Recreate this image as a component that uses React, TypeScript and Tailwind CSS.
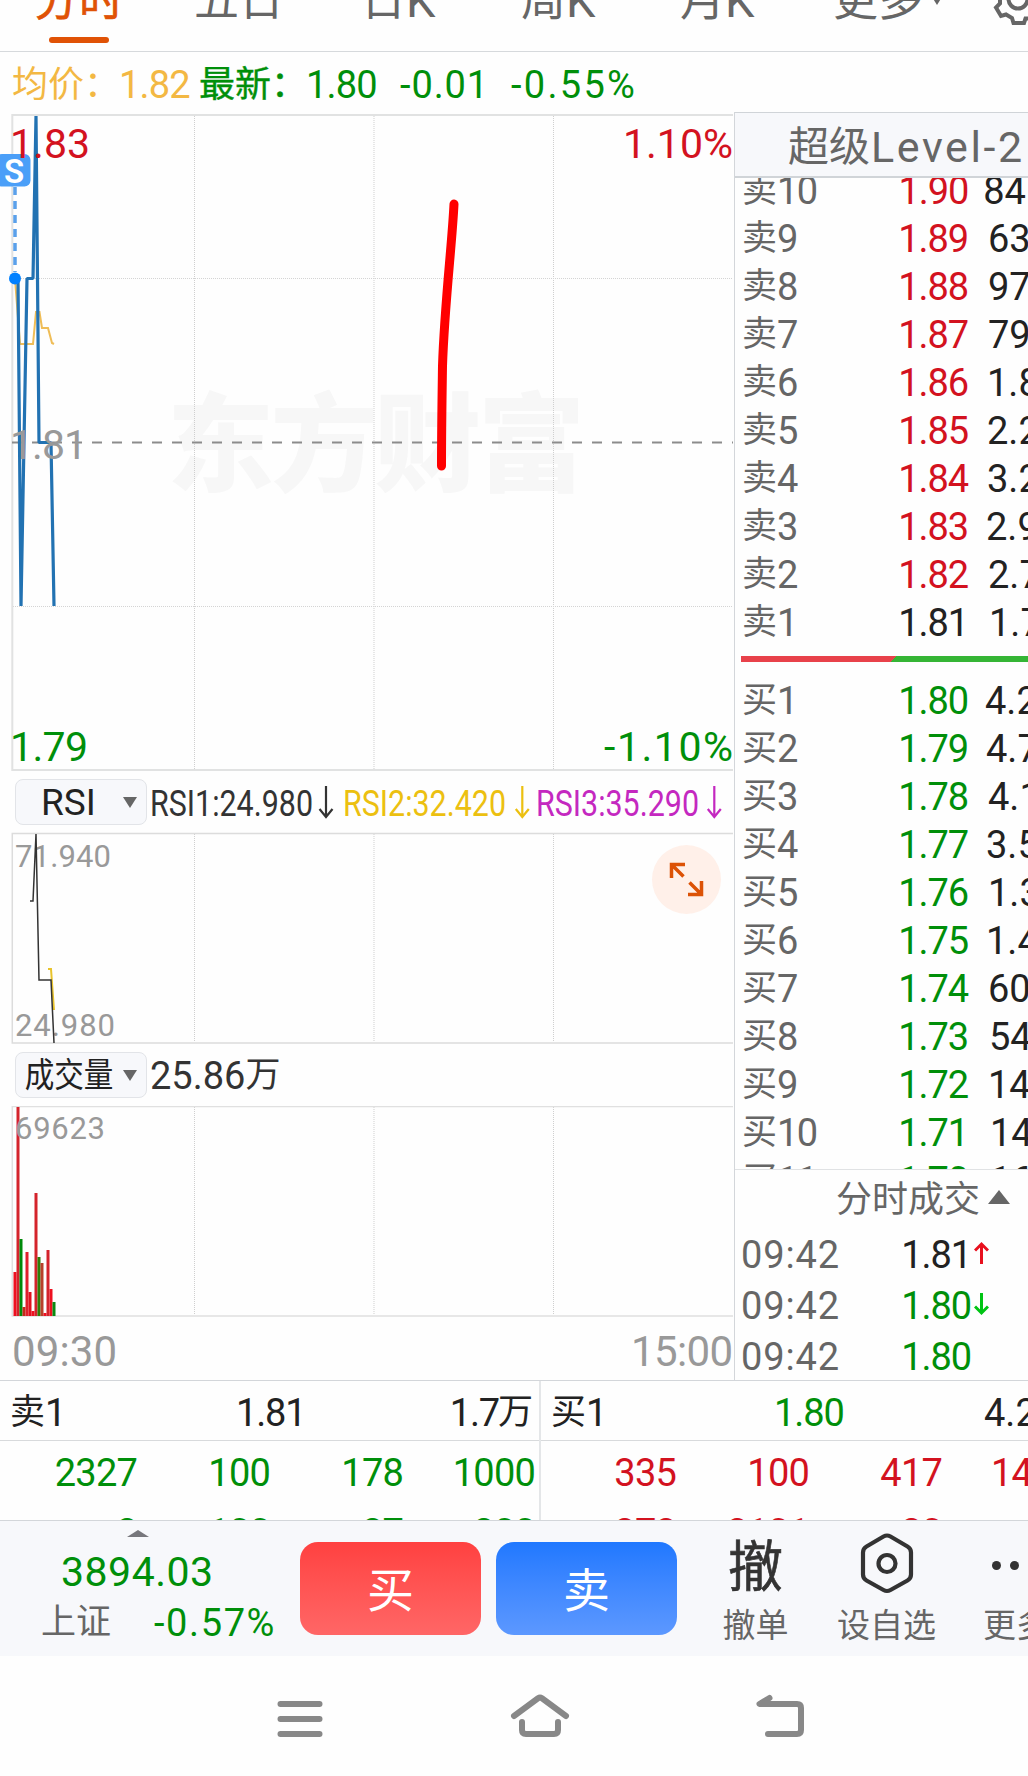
import type { ReactNode } from "react";

const GREEN = "#008f0a";
const RED = "#d3121f";

/* Latin digits are drawn a little larger than the Chinese glyphs beside them. */
function Num({ children, className = "" }: { children: ReactNode; className?: string }) {
  return <span className={`text-[38px] ${className}`}>{children}</span>;
}

const tabs = [
  { cjk: "分时", latin: "", cls: "w-[161px] pl-[34px] text-[#e05206] [-webkit-text-stroke:0.6px]" },
  { cjk: "五日", latin: "", cls: "w-[200px] pl-[33px]" },
  { cjk: "日", latin: "K", cls: "w-[160px]" },
  { cjk: "周", latin: "K", cls: "w-[159px]" },
  { cjk: "月", latin: "K", cls: "w-[153px]" },
];

const sells = [
  { n: "10", p: "1.90", v: "84", pad: "pl-[15px]" },
  { n: "9", p: "1.89", v: "63", pad: "pl-[20px]" },
  { n: "8", p: "1.88", v: "97", pad: "pl-[20px]" },
  { n: "7", p: "1.87", v: "79", pad: "pl-[20px]" },
  { n: "6", p: "1.86", v: "1.8", pad: "pl-[19px]" },
  { n: "5", p: "1.85", v: "2.2", pad: "pl-[19px]" },
  { n: "4", p: "1.84", v: "3.2", pad: "pl-[19px]" },
  { n: "3", p: "1.83", v: "2.9", pad: "pl-[18px]" },
  { n: "2", p: "1.82", v: "2.7", pad: "pl-[20px]" },
  { n: "1", p: "1.81", v: "1.7", pad: "pl-[21px]" },
];

const buys = [
  { n: "1", p: "1.80", v: "4.2", pad: "pl-[17px]" },
  { n: "2", p: "1.79", v: "4.7", pad: "pl-[18px]" },
  { n: "3", p: "1.78", v: "4.1", pad: "pl-[20px]" },
  { n: "4", p: "1.77", v: "3.5", pad: "pl-[18px]" },
  { n: "5", p: "1.76", v: "1.3", pad: "pl-[20px]" },
  { n: "6", p: "1.75", v: "1.4", pad: "pl-[18px]" },
  { n: "7", p: "1.74", v: "60", pad: "pl-[20px]" },
  { n: "8", p: "1.73", v: "54", pad: "pl-[21px]" },
  { n: "9", p: "1.72", v: "14", pad: "pl-[20px]" },
  { n: "10", p: "1.71", v: "14", pad: "pl-[22px]" },
  { n: "11", p: "1.70", v: "16", pad: "pl-[22px]" },
];

const bars: [number, number, string][] = [
  [15, 1272, "#ee1020"],
  [18, 1107, "#d4232b"],
  [21, 1239, "#008a0a"],
  [24, 1307, "#c32a1a"],
  [27, 1252, "#e0202c"],
  [30, 1292, "#e0101e"],
  [33, 1311, "#ee1020"],
  [36, 1193, "#d4232b"],
  [39, 1257, "#2f7d08"],
  [42, 1263, "#b8402a"],
  [45, 1313, "#ee1020"],
  [48, 1250, "#d4232b"],
  [51, 1289, "#ee1020"],
  [54, 1302, "#0a8a12"],
];

function BookRow({ side, n, p, v, pad, tone }: { side: string; n: string; p: string; v: string; pad: string; tone: string }) {
  return (
    <div className="flex h-12 shrink-0 items-center whitespace-nowrap leading-[48px]">
      <div className="flex w-[150px] items-center pl-[7px] pt-[2px] text-[#666]">
        <span className="text-[35px]">{side}</span>
        <Num className="-tracking-[1.5px]">{n}</Num>
      </div>
      <div className={`flex w-[84px] justify-end pt-[2px] ${tone}`}>
        <Num className="-tracking-[1.1px]">{p}</Num>
      </div>
      <div className={`flex w-[60px] pt-[2px] text-[#222] ${pad}`}>
        <Num>{v}</Num>
      </div>
    </div>
  );
}

function VGrid({ y1, y2 }: { y1: number; y2: number }) {
  return (
    <g stroke="#cfcfcf" strokeWidth="1" strokeDasharray="1 1">
      <path d={`M194.5 ${y1}V${y2}`} />
      <path d={`M374 ${y1}V${y2}`} />
      <path d={`M553.5 ${y1}V${y2}`} />
    </g>
  );
}

function PriceChart() {
  return (
    <svg className="block h-[658px] w-[734px]" viewBox="0 114 734 658">
      <text x="167" y="483" fontSize="107" fontWeight="900" fill="#f7f7f7" textLength="418" fontFamily="Noto Sans CJK SC">
        东方财富
      </text>
      <VGrid y1={116} y2={770} />
      <g stroke="#d4d4d4" strokeDasharray="1 1">
        <path d="M13 278.5H733M13 606.5H733" />
      </g>
      <path d="M733 115H12.3V770H733" fill="none" stroke="#e1e2e2" strokeWidth="2" />
      <path d="M12 442.5H733" stroke="#8c8c8c" strokeWidth="2" strokeDasharray="10 10" />
      <path d="M15 279L20 344H33L36 312H39.5L42 328H48L52 343L54 344" fill="none" stroke="#efbd57" strokeWidth="2" />
      <path d="M15 278.5H18L21 606L27 278.5H33L36 116L39 442.500H51L54 606" fill="none" stroke="#2272b2" strokeWidth="3.2" strokeLinejoin="bevel" />
      <path d="M15 187V272" stroke="#5aa0ea" strokeWidth="3.500" strokeDasharray="8 6" />
      <circle cx="15" cy="278.5" r="6" fill="#0080ff" />
      <rect x="-4" y="154" width="34.500" height="32.500" rx="6" fill="#4b9ff8" />
      <text x="14" y="182.500" fontSize="33" fontWeight="600" fill="#fff" textAnchor="middle">S</text>
      <g fontSize="41">
        <text x="10" y="158" fill={RED} textLength="80">1.83</text>
        <text x="623" y="158" fill={RED} textLength="110">1.10%</text>
        <text x="10" y="458.500" fill="#999" textLength="77">1.81</text>
        <text x="10" y="760.500" fill={GREEN} textLength="78">1.79</text>
        <text x="604" y="760.500" fill={GREEN} textLength="129">-1.10%</text>
      </g>
      <path d="M454 204C452 245 444.500 305 442.500 366C442 400 441.500 430 441.500 466" fill="none" stroke="#ff0000" strokeWidth="9" strokeLinecap="round" />
    </svg>
  );
}

function RsiChart() {
  return (
    <svg className="block h-[212px] w-[734px]" viewBox="0 832 734 212">
      <VGrid y1={834} y2={1042} />
      <path d="M733 833.500H12.300V1043H733" fill="none" stroke="#dcdcdc" strokeWidth="1.500" />
      <g fontSize="31" fill="#999">
        <text x="15" y="866.500" textLength="96">71.940</text>
        <text x="15" y="1036" textLength="100">24.980</text>
      </g>
      <path d="M48 969H51L54 1010" fill="none" stroke="#e8c32c" strokeWidth="2" />
      <path d="M30 901H33L36 834L39 980H51L54 1043" fill="none" stroke="#333" strokeWidth="1.500" />
      <circle cx="686.500" cy="879.500" r="34.500" fill="#fff0e9" />
      <path d="M685 864.500H671.500V878M672 865L683.500 876.500M688 894.500H701.500V881M701 894L689.500 882.500" fill="none" stroke="#dc5206" strokeWidth="3.500" />
    </svg>
  );
}

function VolumeChart() {
  return (
    <svg className="block h-[274px] w-[734px]" viewBox="0 1106 734 274">
      <VGrid y1={1107} y2={1315} />
      <path d="M733 1106.500H12.300V1316H733" fill="none" stroke="#e0e0e0" strokeWidth="1.500" />
      {bars.map(([x, y, c]) => (
        <rect key={x} x={x - 1.5} y={y} width="3" height={1316 - y} fill={c} />
      ))}
      <g fill="#999">
        <text x="15" y="1139" fontSize="31" textLength="90">69623</text>
        <text x="12" y="1366" fontSize="42" textLength="105">09:30</text>
        <text x="631" y="1366" fontSize="42" textLength="102">15:00</text>
      </g>
    </svg>
  );
}

function Selector({ children }: { children: ReactNode }) {
  return (
    <div className="relative h-[46px] w-[132px] shrink-0 rounded-lg border border-[#e2e4e8] bg-[#f7f8fb] text-[#222]">
      {children}
      <span className="absolute right-[9px] top-[17px] h-0 w-0 border-x-[7px] border-t-[11px] border-x-transparent border-t-[#666]" />
    </div>
  );
}

function RsiLegend() {
  const items = [
    { x: 150, t: "RSI1:24.980", c: "#333", a: 326 },
    { x: 343, t: "RSI2:32.420", c: "#ecc010", a: 522.3 },
    { x: 536, t: "RSI3:35.290", c: "#c428c0", a: 714.3 },
  ];
  return (
    <svg className="block h-[60px] w-[587px]" viewBox="147 772 587 60">
      {items.map((i) => (
        <g key={i.t}>
          <text x={i.x} y="815.500" fontSize="37" fill={i.c} textLength="163" lengthAdjust="spacingAndGlyphs">
            {i.t}
          </text>
          <path d={`M${i.a} 786V817M${i.a - 6.500} 809L${i.a} 817L${i.a + 6.500} 809`} fill="none" stroke={i.c} strokeWidth="2.200" />
        </g>
      ))}
    </svg>
  );
}

function QueueCells({ rows, widths, color }: { rows: string[][]; widths: string[]; color: string }) {
  return (
    <div className="h-[79px] overflow-hidden pt-[2px]">
      {rows.map((r, k) => (
        <div key={k} className={`flex h-[60px] items-center whitespace-nowrap leading-[60px] ${color}`}>
          {r.map((c, i) => (
            <div key={i} className={`flex shrink-0 justify-end ${widths[i]}`}>
              <Num className="-tracking-[0.8px]">{c}</Num>
            </div>
          ))}
        </div>
      ))}
    </div>
  );
}

export default function App() {
  return (
    <div className="h-[1776px] w-[1028px] overflow-hidden bg-[#fefefe] font-['Roboto','Noto_Sans_CJK_SC',sans-serif]">
      {/* period tabs */}
      <div className="flex h-[52px] overflow-hidden border-b border-[#d6d9dc] text-[45px] leading-[60px] text-[#666]">
        {tabs.map((t, i) => (
          <div key={t.cjk} className={`relative shrink-0 whitespace-nowrap ${t.cls}`}>
            <div className="-mt-[29px] flex items-center">
              {t.cjk}
              {t.latin && <span className="text-[47px]">{t.latin}</span>}
            </div>
            {i === 0 && <div className="absolute left-[49px] top-[37px] h-[6px] w-[60px] rounded-full bg-[#e05206]" />}
          </div>
        ))}
        <div className="-mt-[29px] w-[98px] shrink-0">更多</div>
        <svg className="h-[30px] w-[97px] shrink-0" viewBox="931 0 97 30">
          <path d="M932 -3H942L937 5Z" fill="#666" />
          <g fill="none" stroke="#666" strokeWidth="4">
            <circle cx="1018" cy="-1" r="9.500" />
            <path d="M1028 18.500L1025.500 18.500L1024 23H1013.500L1012 18L1006 14.500L1001 16L996 7.500L1000 3.500V-4" />
          </g>
        </svg>
      </div>

      <div className="flex h-[1328px]">
        {/* charts */}
        <div className="w-[734px] shrink-0">
          <div className="flex h-[62px] items-center whitespace-nowrap pl-[12px] pt-[3px] text-[36px] leading-[58px] text-[#f3b843]">
            <span className="w-[107px]">均价：</span>
            <Num className="w-[80px] -tracking-[0.8px]">1.82</Num>
            <span className="flex text-[#008f0a]">
              <span className="w-[107px] [-webkit-text-stroke:0.4px]">最新：</span>
              <Num className="w-[94px] -tracking-[0.8px]">1.80</Num>
              <Num className="w-[111px] tracking-[0.9px]">-0.01</Num>
              <Num className="tracking-[2.3px]">-0.55%</Num>
            </span>
          </div>
          <PriceChart />
          <div className="flex h-[60px] items-center pl-[15px]">
            <Selector>
              <span className="block pl-[25px] text-[37px] leading-[46px]">RSI</span>
            </Selector>
            <RsiLegend />
          </div>
          <RsiChart />
          <div className="flex h-[62px] items-center pl-[15px]">
            <Selector>
              <span className="block origin-left scale-x-[0.87] whitespace-nowrap pl-[10px] text-[34px] leading-[45px]">成交量</span>
            </Selector>
            <span className="flex items-center pl-[3px] pt-[2px] text-[35px] leading-[60px] text-[#333]">
              <Num>25.86</Num>万
            </span>
          </div>
          <VolumeChart />
        </div>

        {/* order book */}
        <div className="mt-[60px] flex h-[1268px] w-[294px] flex-col overflow-hidden border-l border-[#d3d6da]">
          <div className="flex h-[66px] shrink-0 items-center whitespace-nowrap border-b-2 border-t border-[#d0d4d8] bg-[#f7f8fb] pl-[53px] pt-[4px] text-[41px] leading-[60px] text-[#666]">
            超级<span className="ml-[1px] text-[43px] tracking-[2.6px]">Level-2</span>
          </div>
          <div className="flex h-[992px] shrink-0 flex-col overflow-hidden border-b border-[#e0e2e4]">
            <div className="-mt-[12px]">
              {sells.map((r) => (
                <BookRow key={r.n} side="卖" {...r} tone={r.n === "1" ? "text-[#222]" : "text-[#d3121f]"} />
              ))}
            </div>
            <div className="my-[10px] ml-[6px] h-[6px] shrink-0 bg-[linear-gradient(135deg,#e8414a_0_110px,#35b535_110px)]" />
            <div className="mt-[4px]">
              {buys.map((r) => (
                <BookRow key={r.n} side="买" {...r} tone="text-[#008f0a]" />
              ))}
            </div>
          </div>
          <div className="flex h-[57px] shrink-0 items-center pl-[101px] pt-[4px] text-[36px] leading-[53px] text-[#666]">
            分时成交
            <span className="mb-[8px] ml-[8px] h-0 w-0 border-x-[11px] border-b-[14px] border-x-transparent border-b-[#666]" />
          </div>
          {[
            { p: "1.81", tone: "text-[#222]", c: "#e8101e", d: "M7.500 23V3M1 9.500L7.500 3L14 9.500" },
            { p: "1.80", tone: "text-[#008f0a]", c: "#00c414", d: "M7.500 1V21M1 14.500L7.500 21L14 14.500" },
            { p: "1.80", tone: "text-[#008f0a]", c: "", d: "" },
          ].map((r, i) => (
            <div key={i} className="flex h-[51px] shrink-0 items-center pt-[6px] leading-[45px]">
              <Num className="w-[150px] pl-[6px] tracking-[0.9px] text-[#666]">09:42</Num>
              <Num className={`w-[86px] text-right -tracking-[1.1px] ${r.tone}`}>{r.p}</Num>
              {r.d && (
                <svg className="mb-[5px] ml-[3px] h-6 w-[15px]" viewBox="0 0 15 24">
                  <path d={r.d} fill="none" stroke={r.c} strokeWidth="3" />
                </svg>
              )}
            </div>
          ))}
        </div>
      </div>

      {/* level-one queue */}
      <div className="flex h-[140px] border-t border-[#d3d6da]">
        <div className="w-[541px] shrink-0 border-r-2 border-[#e4e6e8]">
          <div className="flex h-[60px] items-center whitespace-nowrap border-b border-[#d8dadc] pl-[10px] pt-[4px] text-[35px] leading-[56px] text-[#222]">
            <span className="flex w-[226px]">卖<Num>1</Num></span>
            <Num className="-tracking-[1.2px]">1.81</Num>
            <span className="ml-auto flex pr-[6px]"><Num className="-tracking-[1.2px]">1.7</Num><span className="-ml-[1px]">万</span></span>
          </div>
          <QueueCells
            color="text-[#008f0a]"
            widths={["w-[137px]", "w-[133px]", "w-[133px]", "w-[132px]"]}
            rows={[["2327", "100", "178", "1000"], ["2", "100", "27", "200"]]}
          />
        </div>
        <div className="w-[487px] overflow-hidden">
          <div className="flex h-[60px] items-center whitespace-nowrap border-b border-[#d8dadc] pl-[10px] pt-[4px] text-[35px] leading-[56px] text-[#222]">
            <span className="flex w-[223px] shrink-0">买<Num>1</Num></span>
            <Num className="w-[210px] shrink-0 -tracking-[1.1px] text-[#008f0a]">1.80</Num>
            <Num>4.2</Num>
          </div>
          <QueueCells
            color="text-[#d3121f]"
            widths={["w-[135px]", "w-[133px]", "w-[133px]", "w-[90px]"]}
            rows={[["335", "100", "417", "14"], ["272", "2101", "20", ""]]}
          />
        </div>
      </div>

      {/* action bar */}
      <div className="flex h-[136px] overflow-hidden border-t border-[#d3d6da] bg-[#f7f8fb]">
        <div className="w-[300px] shrink-0">
          <div className="ml-[127px] mt-[9px] h-0 w-[22px] border-x-[11px] border-b-[7px] border-x-transparent border-b-[#77777c]" />
          <div className="mt-[9px] pl-[61px] text-[41px] leading-[53px] tracking-[0.5px] text-[#008f0a]">3894.03</div>
          <div className="mt-[1px] flex items-center leading-[46px] text-[#666]">
            <span className="ml-[41px] w-[113px] text-[35px]">上证</span>
            <Num className="tracking-[1.6px] text-[#008f0a]">-0.57%</Num>
          </div>
        </div>
        <div className="flex shrink-0 gap-[15px] pt-[21px] text-[47px] text-white">
          <div className="flex h-[93px] w-[181px] items-center justify-center rounded-[18px] bg-linear-to-b from-[#ff4040] to-[#ff6666] pt-[5px]">买</div>
          <div className="flex h-[93px] w-[181px] items-center justify-center rounded-[18px] bg-linear-to-b from-[#1f78ff] to-[#5c98ff] pt-[5px]">卖</div>
        </div>
        <div className="flex w-[157px] shrink-0 flex-col items-center text-[#666]">
          <div className="mt-[11px] text-[55px] leading-[70px] text-[#333] [-webkit-text-stroke:0.6px]">撤</div>
          <div className="text-[33px] leading-[48px]">撤单</div>
        </div>
        <div className="flex w-[105px] shrink-0 flex-col items-center whitespace-nowrap text-[#666]">
          <svg className="mt-[11px] h-[64px] w-[60px]" viewBox="0 0 60 64">
            <g fill="none" stroke="#333" strokeWidth="4.200">
              <path d="M26.500 4.500Q30 2.500 33.500 4.500L50.500 14.500Q54 16.500 54 20.500V42.500Q54 46.500 50.500 48.500L33.500 58Q30 60 26.500 58L9.500 48.500Q6 46.500 6 42.500V20.500Q6 16.500 9.500 14.500Z" />
              <circle cx="30" cy="31.500" r="8.500" />
            </g>
          </svg>
          <div className="mt-[6px] text-[33px] leading-[48px]">设自选</div>
        </div>
        <div className="ml-[44px] w-[66px] shrink-0 text-[#666]">
          <div className="ml-[9px] mt-[40px] flex gap-[9px]">
            <span className="h-[9px] w-[9px] shrink-0 rounded-full bg-[#333]" />
            <span className="h-[9px] w-[9px] shrink-0 rounded-full bg-[#333]" />
            <span className="h-[9px] w-[9px] shrink-0 rounded-full bg-[#333]" />
          </div>
          <div className="mt-[32px] whitespace-nowrap text-[33px] leading-[48px]">更多</div>
        </div>
      </div>

      {/* system navigation */}
      <div className="flex h-[120px] items-start pl-[270px] pt-[34px]">
        <svg className="h-[54px] w-[60px]" viewBox="270 1690 60 54">
          <path d="M280.500 1704H319.500M280.500 1719H319.500M280.500 1734H319.500" stroke="#888" strokeWidth="6" strokeLinecap="round" />
        </svg>
        <svg className="ml-[180px] h-[54px] w-[60px]" viewBox="510 1690 60 54">
          <path d="M514 1716L538 1698.300Q540 1697 542 1698.300L566 1716M522 1722V1730Q522 1734 526 1734H554Q558 1734 558 1730V1722" fill="none" stroke="#888" strokeWidth="6" strokeLinecap="round" />
        </svg>
        <svg className="ml-[180px] h-[54px] w-[60px]" viewBox="750 1690 60 54">
          <path d="M769.500 1698L759.500 1704H797Q801 1704 801 1708V1730Q801 1734 797 1734H768" fill="none" stroke="#888" strokeWidth="6" strokeLinecap="round" strokeLinejoin="round" />
        </svg>
      </div>
    </div>
  );
}
